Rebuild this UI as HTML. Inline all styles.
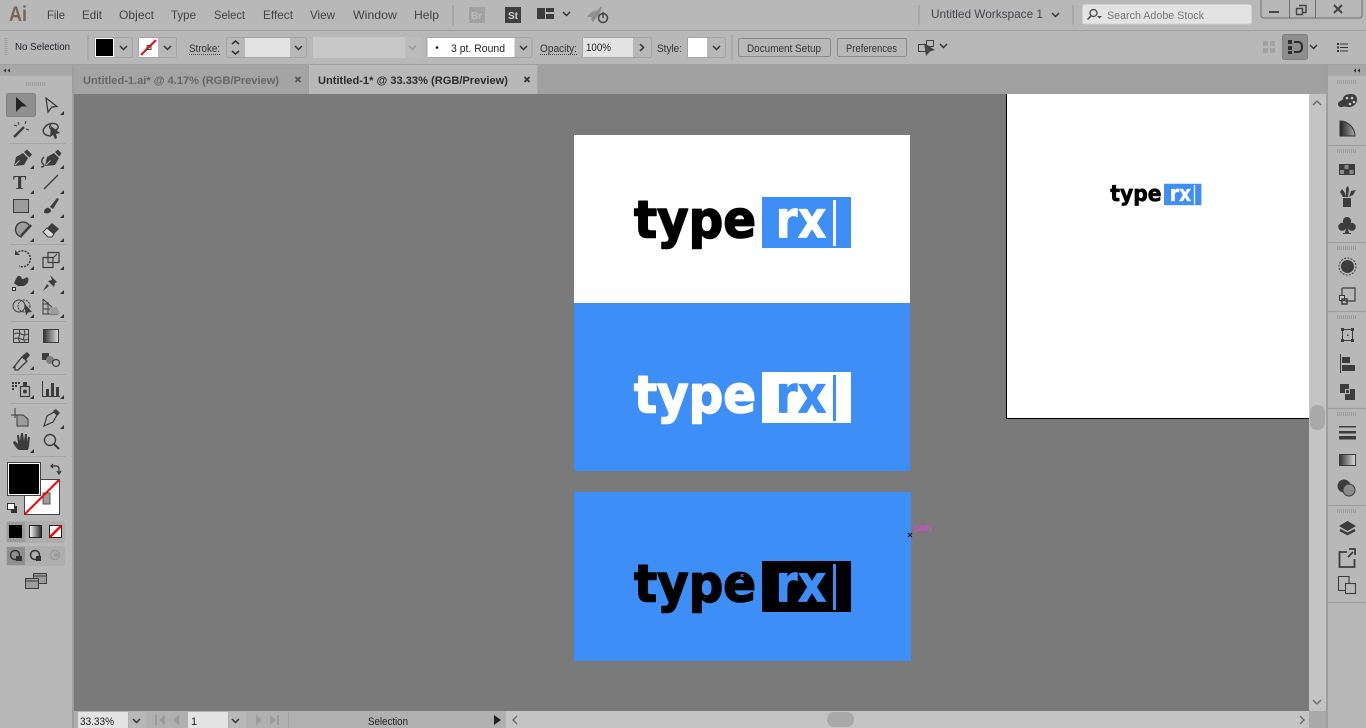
<!DOCTYPE html>
<html><head><meta charset="utf-8"><title>Illustrator</title>
<style>
html,body{margin:0;padding:0;width:1366px;height:728px;overflow:hidden;background:#b8b8b8}
svg{display:block;position:absolute;left:0;top:0}
text{font-family:"Liberation Sans",sans-serif;font-size:11px;fill:#333;white-space:pre}
.m{font-size:12px;fill:#444}
.b{font-weight:bold;font-size:11px}
.logo{font-family:"DejaVu Sans",sans-serif;font-weight:bold;font-size:52px;stroke-linejoin:round}
.ic{fill:#3c3c3c;stroke:none}
.ol{fill:none;stroke:#3c3c3c;stroke-width:1.4}
.ch{fill:none;stroke:#333;stroke-width:1.5}
.box{fill:#b8b8b8;stroke:#a4a4a4;stroke-width:1}
.tri{fill:#333}
</style></head><body>
<svg width="1366" height="728" viewBox="0 0 1366 728" xmlns="http://www.w3.org/2000/svg">
<defs>
<linearGradient id="g" x1="0" x2="1"><stop offset="0" stop-color="#333"/><stop offset="1" stop-color="#ddd"/></linearGradient>
<linearGradient id="g2" x1="0" x2="1"><stop offset="0" stop-color="#fff"/><stop offset="1" stop-color="#222"/></linearGradient>
<linearGradient id="g3" x1="0" x2="1"><stop offset="0" stop-color="#222"/><stop offset="1" stop-color="#aaa"/></linearGradient>
</defs>
<rect width="1366" height="728" fill="#b8b8b8"/>
<!-- row separators -->
<rect x="0" y="30" width="1366" height="1" fill="#a0a0a0"/>
<rect x="0" y="64" width="1366" height="1" fill="#a0a0a0"/>

<!-- menu bar -->
<text x="9" y="21" style="font-size:21px;font-weight:bold;fill:#7a6353" textLength="18" lengthAdjust="spacingAndGlyphs">Ai</text>
<text class="m" x="47" y="19" textLength="18" lengthAdjust="spacingAndGlyphs">File</text>
<text class="m" x="82" y="19" textLength="20" lengthAdjust="spacingAndGlyphs">Edit</text>
<text class="m" x="119" y="19" textLength="35" lengthAdjust="spacingAndGlyphs">Object</text>
<text class="m" x="171" y="19" textLength="25" lengthAdjust="spacingAndGlyphs">Type</text>
<text class="m" x="214" y="19" textLength="31" lengthAdjust="spacingAndGlyphs">Select</text>
<text class="m" x="263" y="19" textLength="30" lengthAdjust="spacingAndGlyphs">Effect</text>
<text class="m" x="310" y="19" textLength="25" lengthAdjust="spacingAndGlyphs">View</text>
<text class="m" x="353" y="19" textLength="44" lengthAdjust="spacingAndGlyphs">Window</text>
<text class="m" x="414" y="19" textLength="25" lengthAdjust="spacingAndGlyphs">Help</text>
<rect x="452" y="5" width="2" height="20" fill="#a8a8a8"/>
<rect x="469" y="7" width="16" height="16" fill="#a2a2a2"/>
<text x="471" y="19" style="font-size:10px;font-weight:bold;fill:#bcbcbc">Br</text>
<rect x="505" y="7" width="16" height="16" fill="#3f3f3f"/>
<text x="508" y="19" style="font-size:10px;font-weight:bold;fill:#cfcfcf">St</text>
<path class="ic" d="M537 8h8v11h-8zM546 8h8v4h-8zM546 14h8v5h-8z"/>
<path class="ch" d="M563 12l3.500 3.500 3.500-3.500"/>
<path d="M587 17c3-4 6-6 9-7l-4 7zM591 19c3-6 7-10 11-13-1 5-3 9-6 12l-3 4z" fill="#8c8c8c"/>
<circle cx="603" cy="18" r="4.500" fill="none" stroke="#444" stroke-width="1.500"/>
<rect x="602.300" y="12" width="1.500" height="6" fill="#444"/>
<rect x="918" y="5" width="2" height="20" fill="#a8a8a8"/>
<text class="m" x="931" y="18" textLength="112" lengthAdjust="spacingAndGlyphs" style="fill:#4a4450">Untitled Workspace 1</text>
<path class="ch" d="M1052 13l3.500 3.500 3.500-3.500"/>
<rect x="1072" y="5" width="2" height="20" fill="#a8a8a8"/>
<rect x="1082.500" y="4.500" width="169" height="19.500" rx="2" fill="#e3e3e3" stroke="#cfcfcf"/>
<circle cx="1093.500" cy="13" r="3.500" fill="none" stroke="#444" stroke-width="1.300"/>
<path d="M1091 16l-3.500 3.500" stroke="#444" stroke-width="1.500"/>
<path d="M1097 16h5l-2.500 2.500z" fill="#444"/>
<text x="1107" y="19" textLength="97" lengthAdjust="spacingAndGlyphs" style="fill:#777">Search Adobe Stock</text>
<path d="M1261 0v15q0 3 3 3h95q3 0 3-3V0" fill="none" stroke="#6e6e6e"/>
<path d="M1289.500 0v18M1315.500 0v18" stroke="#6e6e6e"/>
<rect x="1269" y="11" width="10" height="2" fill="#444"/>
<path d="M1299 5.500h7v7h-3M1296.500 8.500h6v6h-6z" fill="none" stroke="#444" stroke-width="1.400"/>
<path d="M1334 5l8 8M1342 5l-8 8" stroke="#444" stroke-width="2"/>

<!-- control bar -->
<path d="M6 38v18" stroke="#9c9c9c" stroke-width="3" stroke-dasharray="1 1"/>
<text x="15" y="50" textLength="55" lengthAdjust="spacingAndGlyphs" style="font-size:10px;fill:#223">No Selection</text>
<rect x="87" y="35" width="2" height="25" fill="#a8a8a8"/>
<rect x="94.500" y="37.500" width="38" height="20" rx="2" class="box"/>
<rect x="95" y="38" width="19" height="19" fill="#fff"/><rect x="96" y="39" width="17" height="17" fill="#000"/>
<path class="ch" d="M120 46l3.500 3.500 3.500-3.500"/>
<rect x="138.500" y="37.500" width="38" height="20" rx="2" class="box"/>
<rect x="139" y="38" width="19" height="19" fill="#fff"/>
<path d="M141 55l15-15" stroke="#e8131b" stroke-width="2.200"/>
<rect x="147" y="45.500" width="4" height="4" fill="none" stroke="#444"/>
<path class="ch" d="M164 46l3.500 3.500 3.500-3.500"/>
<text x="189" y="52" textLength="31" lengthAdjust="spacingAndGlyphs" style="font-size:11px">Stroke:</text>
<path d="M189 54.500h31" stroke="#444" stroke-dasharray="1 1"/>
<rect x="226.500" y="37.500" width="80" height="20" rx="2" class="box"/>
<rect x="245" y="38" width="45" height="19" fill="#e3e3e3"/>
<path class="ch" d="M232 44l3.500-3 3.500 3M232 51l3.500 3 3.500-3"/>
<path class="ch" d="M295 46l3.500 3.500 3.500-3.500"/>
<rect x="313" y="37" width="92" height="21" fill="#c8c8c8"/><rect x="405" y="37" width="17" height="21" fill="#bcbcbc"/>
<path d="M409 46l3.500 3.500 3.500-3.500" fill="none" stroke="#999" stroke-width="1.500"/>
<rect x="427" y="37.500" width="105" height="20" rx="2" fill="#b8b8b8" stroke="#a4a4a4"/>
<rect x="427.500" y="38" width="87" height="19" fill="#fff"/>
<circle cx="437" cy="47.500" r="1.300" fill="#111"/>
<text x="451" y="52" textLength="54" lengthAdjust="spacingAndGlyphs" style="font-size:11px;fill:#222">3 pt. Round</text>
<path class="ch" d="M520 46l3.500 3.500 3.500-3.500"/>
<text x="540" y="52" textLength="37" lengthAdjust="spacingAndGlyphs">Opacity:</text>
<path d="M540 54.500h37" stroke="#444" stroke-dasharray="1 1"/>
<rect x="582.500" y="37.500" width="69" height="20" rx="2" class="box"/>
<rect x="583" y="38" width="50" height="19" fill="#e3e3e3"/>
<text x="586" y="51" textLength="25" lengthAdjust="spacingAndGlyphs" style="fill:#222">100%</text>
<path class="ch" d="M640 44l3.500 3.500-3.500 3.500"/>
<text x="657" y="52" textLength="25" lengthAdjust="spacingAndGlyphs">Style:</text>
<rect x="687.500" y="37.500" width="38" height="20" rx="2" class="box"/>
<rect x="688" y="38" width="19" height="19" fill="#fff"/>
<path class="ch" d="M713 46l3.500 3.500 3.500-3.500"/>
<rect x="731" y="35" width="2" height="25" fill="#a8a8a8"/>
<rect x="738.500" y="38.500" width="92" height="18" rx="2" fill="#b8b8b8" stroke="#888"/>
<text x="747" y="52" textLength="74" lengthAdjust="spacingAndGlyphs" style="fill:#333">Document Setup</text>
<rect x="837.500" y="38.500" width="69" height="18" rx="2" fill="#b8b8b8" stroke="#888"/>
<text x="846" y="52" textLength="51" lengthAdjust="spacingAndGlyphs" style="fill:#333">Preferences</text>
<path d="M918.500 44.500h8v7h-8zM926.500 40.500h7v6h-7z" fill="none" stroke="#444"/>
<path d="M924 43l11 7-5 1.500-4 4.500z" fill="#444"/>
<path class="ch" d="M940 44l3.500 3.500 3.500-3.500"/>
<path d="M1263 41h5v5h-5zM1270 41h5v5h-5zM1263 48h5v5h-5zM1270 48h5v5h-5z" fill="#a2a2a2"/>
<rect x="1282.500" y="34.500" width="25" height="25" rx="2" fill="#8e8e8e" stroke="#808080"/>
<path d="M1288 40h4v4h-4zM1288 46h4v4h-4zM1288 51h4v3h-4z" fill="#2e2e2e"/>
<path d="M1294 42h4q4 0 4 5t-4 5h-4" fill="none" stroke="#2e2e2e" stroke-width="2"/>
<path class="ch" d="M1310 45l3.500 3.500 3.500-3.500"/>
<path d="M1337 43h2v2h-2zM1337 46.500h2v2h-2zM1337 50h2v2h-2zM1340 43.500h8v1h-8zM1340 47h8v1h-8zM1340 50.500h8v1h-8z" fill="#333"/>

<!-- tabs -->
<rect x="73" y="65" width="1254" height="29" fill="#a0a0a0"/>
<rect x="73" y="65" width="235" height="29" fill="#a4a4a4"/>
<rect x="309" y="65" width="228" height="29" fill="#b8b8b8"/>
<rect x="537" y="65" width="1" height="29" fill="#a8a8a8"/>
<text class="b" x="83" y="84" textLength="196" lengthAdjust="spacingAndGlyphs" style="fill:#666">Untitled-1.ai* @ 4.17% (RGB/Preview)</text>
<path d="M295.500 77l5 5M300.500 77l-5 5" stroke="#555" stroke-width="1.700"/>
<text class="b" x="318" y="84" textLength="190" lengthAdjust="spacingAndGlyphs" style="fill:#2c2c2c">Untitled-1* @ 33.33% (RGB/Preview)</text>
<path d="M524.500 77l5 5M529.500 77l-5 5" stroke="#333" stroke-width="1.700"/>

<!-- canvas -->
<rect x="74" y="94" width="1235" height="617" fill="#7a7a7a"/>

<!-- right artboard -->
<rect x="1006" y="94" width="303" height="325" fill="#000"/>
<rect x="1007" y="94" width="302" height="324" fill="#fff"/>

<!-- artboards -->
<rect x="574" y="135" width="336" height="168" fill="#fff"/>
<rect x="574" y="303" width="336" height="168" fill="#3e8ef7"/>
<rect x="574" y="492" width="337" height="169" fill="#3e8ef7"/>

<!-- logo 1 -->
<text class="logo" x="634" y="237.500" textLength="122" lengthAdjust="spacingAndGlyphs" style="fill:#000;stroke:#000;stroke-width:1.600">type</text>
<rect x="762" y="197" width="89" height="51" fill="#3e8ef7"/>
<text class="logo" x="775.500" y="237.500" textLength="51" lengthAdjust="spacingAndGlyphs" style="fill:#fff;stroke:#fff;stroke-width:.7">rx</text>
<rect x="833" y="200" width="3" height="46" fill="#fff"/>
<!-- logo 2 -->
<text class="logo" x="634" y="412.500" textLength="122" lengthAdjust="spacingAndGlyphs" style="fill:#fff;stroke:#fff;stroke-width:1.600">type</text>
<rect x="762" y="372" width="89" height="51" fill="#fff"/>
<text class="logo" x="775.500" y="412.500" textLength="51" lengthAdjust="spacingAndGlyphs" style="fill:#3e8ef7;stroke:#3e8ef7;stroke-width:.7">rx</text>
<rect x="833" y="375" width="3" height="46" fill="#3e8ef7"/>
<!-- logo 3 -->
<text class="logo" x="634" y="601.500" textLength="122" lengthAdjust="spacingAndGlyphs" style="fill:#000;stroke:#000;stroke-width:1.600">type</text>
<rect x="762" y="561" width="89" height="51" fill="#000"/>
<text class="logo" x="775.500" y="601.500" textLength="51" lengthAdjust="spacingAndGlyphs" style="fill:#3e8ef7;stroke:#3e8ef7;stroke-width:.7">rx</text>
<rect x="833" y="564" width="3" height="46" fill="#3e8ef7"/>
<!-- small logo -->
<g transform="translate(844 101) scale(.42)">
<text class="logo" x="634" y="237.500" textLength="122" lengthAdjust="spacingAndGlyphs" style="fill:#000;stroke:#000;stroke-width:1.600">type</text>
<rect x="762" y="197" width="89" height="51" fill="#3e8ef7"/>
<text class="logo" x="775.500" y="237.500" textLength="51" lengthAdjust="spacingAndGlyphs" style="fill:#fff;stroke:#fff;stroke-width:.7">rx</text>
<rect x="833" y="200" width="3" height="46" fill="#fff"/>
</g>
<!-- smart guide -->
<text x="914" y="531" style="font-size:9px;fill:#f03ce6">path</text>
<path d="M908 533l4 4M912 533l-4 4" stroke="#111" stroke-width="1"/>
<path d="M740.500 574l3 3M743.500 574l-3 3" stroke="#6a5ae0" stroke-width="1"/>

<!-- left toolbar -->
<rect x="0" y="65" width="72" height="11" fill="#a8a8a8"/>
<rect x="72" y="65" width="2" height="663" fill="#9e9e9e"/>
<path d="M6 68.500l-2.500 2 2.500 2zM10 68.500l-2.500 2 2.500 2z" fill="#333"/>
<path d="M26.500 82v4M28.500 82v4M30.500 82v4M32.500 82v4M34.500 82v4M36.500 82v4M38.500 82v4M40.500 82v4M42.500 82v4M44.500 82v4" stroke="#9a9a9a"/>
<rect x="6.500" y="93.500" width="29" height="23" rx="2" fill="#8f8f8f" stroke="#808080"/>
<path d="M16 97l11 9.500h-5.500l-5.500 5.500z" fill="#222"/>
<path d="M46 98l11 8.500-5 .5-4 5z" fill="none" stroke="#333" stroke-width="1.200"/>
<path class="tri" d="M64 111v4h-4z"/>
<!-- magic wand / lasso -->
<path d="M14 137l10-10" stroke="#3c3c3c" stroke-width="2.400"/>
<path d="M18 122l1 3M14 125l3 1M26 121l-1 3M29 130l-3-1" stroke="#3c3c3c"/>
<path class="ol" d="M50 136c-8-1-8-6-5-9 3-4 11-5 13-1 1 3-3 5-5 4-4-1-4-4-2-5"/>
<path d="M51 126l9 7-4 1 1 4-2 1-2-4-3 2z" fill="#3c3c3c"/>
<rect x="10" y="143" width="56" height="1" fill="#a4a4a4"/>
<!-- pen / curvature -->
<path class="ic" d="M14 166l2-9 7-4 5 5-4 7zM24 152l3-2.500 5 5-2.500 3z"/><path d="M15 165l4.500-4.500" stroke="#b8b8b8"/>
<path class="tri" d="M34 165v4h-4z"/>
<path class="ic" d="M45 166l2-9 7-4 5 5-4 7zM55 152l3-2.500 3.500 4-2.500 3z"/><path d="M46 165l4.500-4.500" stroke="#b8b8b8"/>
<path class="ol" d="M44 157c-3 3-3 5-1 7s0 3-2 3"/>
<path class="tri" d="M64 165v4h-4z"/>
<!-- type / line -->
<text x="13" y="189" style="font-family:'Liberation Serif',serif;font-size:20px;font-weight:bold;fill:#3c3c3c">T</text>
<path class="tri" d="M34 190v4h-4z"/>
<path d="M44 189l14-14" stroke="#3c3c3c" stroke-width="1.300"/>
<path class="tri" d="M64 190v4h-4z"/>
<!-- rect / brush -->
<rect x="13.500" y="199.500" width="15" height="13" fill="#9c9c9c" stroke="#3c3c3c"/>
<path class="tri" d="M34 214v4h-4z"/>
<path class="ic" d="M44 213c0-4 3-6 5-5l2 2c0 3-3 4-7 3zM50 207l7-9 2 1-6 10z"/>
<path class="tri" d="M64 214v4h-4z"/>
<!-- shaper / eraser -->
<path d="M29 225a7.500 7.500 0 1 0-7 12" fill="#9c9c9c" stroke="#3c3c3c" stroke-width="1.400"/>
<path d="M21 236l10-11" stroke="#3c3c3c" stroke-width="2.500"/>
<path class="tri" d="M34 238v4h-4z"/>
<path class="ic" d="M43 232l9-9 7 6-5 5z"/><path d="M43 232l4-4 7 6-2 3h-4z" fill="#d8d8d8" stroke="#3c3c3c"/>
<path class="tri" d="M64 238v4h-4z"/>
<rect x="10" y="244" width="56" height="1" fill="#a4a4a4"/>
<!-- rotate / scale -->
<path d="M16 254a8 8 0 1 1 3 12" fill="none" stroke="#3c3c3c" stroke-width="1.500" stroke-dasharray="2 1.200"/>
<path d="M15 250v5h5z" fill="#3c3c3c"/>
<path class="tri" d="M34 266v4h-4z"/>
<path d="M43 257.500h10v10h-10zM48 252.500h11v10h-11z" fill="none" stroke="#3c3c3c" stroke-width="1.200"/>
<path d="M53 258l4-4" stroke="#3c3c3c"/>
<path class="tri" d="M64 266v4h-4z"/>
<!-- width / pin -->
<path class="ic" d="M14 283c2-4 3-8 6-7 2 1 1 3 3 3s3-3 5-1c2 3-2 8-5 8-4 0-5 1-9-3z"/>
<rect x="12.500" y="287.500" width="3" height="3" fill="#ddd" stroke="#333"/>
<path class="tri" d="M34 290v4h-4z"/>
<path class="ic" d="M50 275l7 7-2 1-1 4-6-6 4-1zM47 284l2 2-6 5z"/>
<path class="tri" d="M64 290v4h-4z"/>
<!-- shape builder / perspective -->
<circle cx="19" cy="306" r="6" fill="none" stroke="#3c3c3c"/><circle cx="24" cy="306" r="6" fill="none" stroke="#3c3c3c" stroke-dasharray="2 1"/>
<path d="M24 303l8 9-4 .5-2 3z" fill="#3c3c3c"/>
<path class="tri" d="M34 314v4h-4z"/>
<path d="M43 299v15h15M43 299l12 11M43 304h6M43 309h10M48 302v12" fill="none" stroke="#3c3c3c"/>
<path d="M50 307h7l3 7h-10z" fill="#9c9c9c"/>
<path class="tri" d="M64 314v4h-4z"/>
<rect x="10" y="321" width="56" height="1" fill="#a4a4a4"/>
<!-- mesh / gradient -->
<rect x="13.500" y="329.500" width="15" height="13" fill="none" stroke="#3c3c3c"/>
<path d="M14 334c5-3 9 3 14 0M14 339c5-3 9 3 14 0M19 330c3 4-3 8 1 12M24 330c3 4-3 8 1 12" fill="none" stroke="#3c3c3c"/>
<rect x="43.500" y="329.500" width="15" height="13" fill="url(#g)" stroke="#3c3c3c"/>
<!-- eyedropper / blend -->
<path d="M15 366l-2 2 9-11 5 4-9 9h-3z" fill="none" stroke="#3c3c3c" stroke-width="1.300"/>
<path class="ic" d="M22 356l5-4 3 3-4 5z"/>
<path class="tri" d="M34 366v4h-4z"/>
<rect x="42" y="353" width="7" height="7" fill="#3c3c3c"/><circle cx="50" cy="360" r="4" fill="#7c7c7c"/><circle cx="56" cy="363" r="3.500" fill="none" stroke="#3c3c3c" stroke-width="1.200"/>
<rect x="10" y="374" width="56" height="1" fill="#a4a4a4"/>
<!-- symbol sprayer / graph -->
<path d="M12 382h2v2h-2zM15 382h2v2h-2zM18 382h2v2h-2zM12 385h2v2h-2zM15 385h2v2h-2zM12 388h2v2h-2z" fill="#3c3c3c"/>
<rect x="20.500" y="386.500" width="9" height="10" fill="none" stroke="#3c3c3c" stroke-width="1.200"/><circle cx="25" cy="391.500" r="2" fill="#3c3c3c"/><rect x="23" y="382" width="4" height="4" fill="#3c3c3c"/>
<path class="tri" d="M34 395v4h-4z"/>
<path d="M42.500 381v15.500H60" fill="none" stroke="#3c3c3c"/>
<path class="ic" d="M46 389h3v7h-3zM51 383h3v13h-3zM56 387h3v9h-3z"/>
<path class="tri" d="M64 395v4h-4z"/>
<rect x="10" y="403" width="56" height="1" fill="#a4a4a4"/>
<!-- artboard / slice -->
<path d="M11 415h7M15 408v10" stroke="#3c3c3c"/>
<path d="M17 415h6l5 4v7h-11z" fill="#9c9c9c" stroke="#3c3c3c"/>
<path d="M44 426l3-10 7-4 3 3-4 7z" fill="none" stroke="#3c3c3c" stroke-width="1.200"/>
<path class="ic" d="M53 411l3-2 4 4-3 3z"/>
<path class="tri" d="M64 425v4h-4z"/>
<!-- hand / zoom -->
<path class="ic" d="M19 450c-3-2-5-5-6-8l2-1 3 3-1-9h2l1 6 1-8h2l1 8 1-7h2v8l1-5h2l-1 9-1 4z"/>
<path class="tri" d="M34 449v4h-4z"/>
<circle cx="50" cy="440" r="5.500" fill="none" stroke="#3c3c3c" stroke-width="1.400"/>
<path d="M54 444l5 5" stroke="#3c3c3c" stroke-width="2"/>
<rect x="10" y="456" width="56" height="1" fill="#a4a4a4"/>
<!-- fill / stroke -->
<rect x="24.500" y="479.500" width="35" height="35" fill="#fff" stroke="#444"/>
<rect x="43" y="493" width="7" height="11" fill="#9c9c9c" stroke="#555"/>
<path d="M25 514l34-34" stroke="#f00" stroke-width="2"/>
<rect x="7" y="462" width="34" height="34" fill="#444"/>
<rect x="8" y="463" width="32" height="32" fill="#fff"/>
<rect x="9" y="464" width="30" height="30" fill="#000"/>
<path d="M53 464l-2 2 2 2M51 466h5q3 0 3 3v4M57 471l2 3 2-3" fill="none" stroke="#333" stroke-width="1.200"/>
<rect x="11.500" y="506.500" width="5" height="6" fill="#333" stroke="#333"/>
<rect x="7.500" y="503.500" width="7" height="6" fill="#fff" stroke="#333"/>
<!-- colour modes -->
<rect x="6" y="521" width="59" height="22" rx="2" fill="#aeaeae"/>
<rect x="7" y="522" width="18" height="20" fill="#9c9c9c"/>
<rect x="9" y="525" width="13" height="13" fill="#000"/>
<rect x="29.500" y="525.500" width="12" height="12" fill="url(#g2)" stroke="#222"/>
<rect x="49.500" y="525.500" width="12" height="12" fill="#fff" stroke="#222"/>
<path d="M50 537l11-11" stroke="#f00" stroke-width="2.500"/>
<!-- draw modes -->
<rect x="6" y="546" width="59" height="20" rx="2" fill="#aeaeae"/>
<rect x="7" y="547" width="18" height="18" fill="#8f8f8f"/>
<circle cx="15" cy="555" r="4.500" fill="none" stroke="#333" stroke-width="1.500"/><rect x="16" y="556" width="6" height="5" fill="#333"/>
<circle cx="35" cy="555" r="4.500" fill="none" stroke="#333" stroke-width="1.500"/><rect x="36" y="556" width="5" height="5" fill="#333"/>
<circle cx="55" cy="555" r="4.500" fill="none" stroke="#9a9a9a" stroke-width="1.500"/><circle cx="56" cy="555" r="2" fill="#9a9a9a"/>
<!-- screen mode -->
<rect x="33.500" y="573.500" width="13" height="10" fill="#9c9c9c" stroke="#3c3c3c"/>
<rect x="25.500" y="578.500" width="13" height="10" fill="#9c9c9c" stroke="#3c3c3c"/>
<path d="M26 581h12M34 576h12" stroke="#3c3c3c"/>

<!-- scrollbars -->
<rect x="1309" y="94" width="17" height="617" fill="#c4c4c4"/>
<rect x="1310" y="405" width="15" height="25" rx="7" fill="#a9a9a9"/>
<path d="M1313 105l4-4 4 4" fill="none" stroke="#666" stroke-width="1.300"/>
<path d="M1313 700l4 4 4-4" fill="none" stroke="#666" stroke-width="1.300"/>
<rect x="505" y="711" width="804" height="17" fill="#c4c4c4"/>
<rect x="827" y="712" width="27" height="15" rx="7" fill="#a9a9a9"/>
<path d="M1300 716l4 4-4 4M517 716l-4 4 4 4" fill="none" stroke="#666" stroke-width="1.300"/>
<rect x="1309" y="711" width="17" height="17" fill="#a9a9a9"/>

<!-- status bar -->
<rect x="74" y="711" width="431" height="17" fill="#b0b0b0"/>
<rect x="78" y="712" width="50" height="16" fill="#e3e3e3"/>
<text x="80" y="725" textLength="34" lengthAdjust="spacingAndGlyphs" style="fill:#222">33.33%</text>
<rect x="129" y="712" width="17" height="16" fill="#b8b8b8"/>
<path class="ch" d="M133 719l3.500 3.500 3.500-3.500"/>
<path d="M155 715h2v10h-2zM165 715v10l-6-5zM179 715v10l-6-5z" fill="#9a9a9a"/>
<rect x="188" y="712" width="40" height="16" fill="#e3e3e3"/>
<text x="191" y="725" style="fill:#222">1</text>
<rect x="229" y="712" width="17" height="16" fill="#b8b8b8"/>
<path class="ch" d="M232 719l3.500 3.500 3.500-3.500"/>
<path d="M256 715v10l6-5zM270 715v10l6-5zM277 715h2v10h-2z" fill="#9a9a9a"/>
<rect x="288" y="712" width="1" height="16" fill="#a4a4a4"/>
<text x="368" y="725" textLength="40" lengthAdjust="spacingAndGlyphs" style="fill:#222">Selection</text>
<path d="M494 715v10l7-5z" fill="#222"/>
<rect x="505" y="711" width="1" height="17" fill="#b0b0b0"/>

<!-- right panel dock -->
<rect x="1326" y="65" width="2" height="663" fill="#9e9e9e"/>
<rect x="1328" y="65" width="38" height="11" fill="#a8a8a8"/>
<path d="M1356 68.500l-2.500 2 2.500 2zM1360 68.500l-2.500 2 2.500 2z" fill="#333"/>
<path d="M1328 145.500h38M1328 242.500h38M1328 311.500h38M1328 408.500h38M1328 505.500h38M1328 602.500h38" stroke="#9e9e9e" stroke-width="1.200"/>
<path d="M1337.500 80v4M1339.500 80v4M1341.500 80v4M1343.500 80v4M1345.500 80v4M1347.500 80v4M1349.500 80v4M1351.500 80v4M1353.500 80v4M1355.500 80v4
M1337.500 149v4M1339.500 149v4M1341.500 149v4M1343.500 149v4M1345.500 149v4M1347.500 149v4M1349.500 149v4M1351.500 149v4M1353.500 149v4M1355.500 149v4
M1337.500 246v4M1339.500 246v4M1341.500 246v4M1343.500 246v4M1345.500 246v4M1347.500 246v4M1349.500 246v4M1351.500 246v4M1353.500 246v4M1355.500 246v4
M1337.500 315v4M1339.500 315v4M1341.500 315v4M1343.500 315v4M1345.500 315v4M1347.500 315v4M1349.500 315v4M1351.500 315v4M1353.500 315v4M1355.500 315v4
M1337.500 412v4M1339.500 412v4M1341.500 412v4M1343.500 412v4M1345.500 412v4M1347.500 412v4M1349.500 412v4M1351.500 412v4M1353.500 412v4M1355.500 412v4
M1337.500 509v4M1339.500 509v4M1341.500 509v4M1343.500 509v4M1345.500 509v4M1347.500 509v4M1349.500 509v4M1351.500 509v4M1353.500 509v4M1355.500 509v4" stroke="#9a9a9a"/>
<!-- palette -->
<path class="ic" d="M1338 104c0-3 4-3 5-5 0-3 3-5 8-5s6 3 6 6-3 7-8 7c-3 0-4-1-7 0-2 .5-4-1-4-3z"/>
<circle cx="1347" cy="98" r="1.300" fill="#ccc"/><circle cx="1352" cy="98" r="1.300" fill="#ccc"/><circle cx="1354" cy="102" r="1.300" fill="#ccc"/><circle cx="1350" cy="104" r="1.300" fill="#ccc"/>
<!-- colour guide -->
<path d="M1340 121c8 0 15 7 15 15h-15z" fill="url(#g3)" stroke="#333"/>
<!-- swatches -->
<rect x="1339" y="164" width="16" height="11" fill="#3c3c3c"/>
<path d="M1344.500 165h4v4h-4zM1349.500 170h4v4h-4zM1340 170h4v4h-4z" fill="#8a8a8a"/>
<!-- brushes -->
<rect x="1343" y="198" width="8" height="9" fill="#3c3c3c"/>
<path class="ic" d="M1343 197l-3-5 2-3 3 4 1 4zM1346 197v-9l2-2 1 3-1 8zM1349 197l2-6 5-1-3 5z"/>
<!-- club -->
<path class="ic" d="M1347 217a4 4 0 0 1 3.500 6 4 4 0 1 1-2.500 5l1 5h2v1h-8v-1h2l1-5a4 4 0 1 1-2.500-5 4 4 0 0 1 3.500-6z"/>
<!-- appearance -->
<circle cx="1347.500" cy="266.500" r="6.500" fill="#3c3c3c"/>
<circle cx="1347.500" cy="266.500" r="8.500" fill="none" stroke="#3c3c3c" stroke-dasharray="2 1.300"/>
<!-- graphic styles -->
<path d="M1342 288h13v13h-10" fill="none" stroke="#3c3c3c" stroke-width="1.200"/>
<path d="M1342 288v8" stroke="#3c3c3c" stroke-width="1.200"/>
<rect x="1339.500" y="295.500" width="5" height="5" fill="#ccc" stroke="#3c3c3c"/>
<rect x="1342" y="299" width="5" height="5" fill="none" stroke="#3c3c3c" stroke-width="1.500"/>
<!-- transform -->
<path d="M1342.500 329.500h10v11h-10z" fill="none" stroke="#3c3c3c"/>
<path d="M1341 328h3v3h-3zM1351 328h3v3h-3zM1341 339h3v3h-3zM1351 339h3v3h-3zM1347 334.500h1.500v1.500h-1.500z" fill="#3c3c3c"/>
<!-- align -->
<path class="ic" d="M1340 354h1v19h-1zM1342 357h8v6h-8zM1342 365h13v6h-13z"/>
<!-- pathfinder -->
<path class="ic" d="M1340 384h9v5h-4v4h-5zM1346 390h3v3h-3zM1350 389h5v11h-10v-6h5z"/>
<!-- stroke -->
<path class="ic" d="M1339 426h17v1.500h-17zM1339 431h17v2.500h-17zM1339 436h17v3.500h-17z"/>
<!-- gradient -->
<rect x="1339.500" y="454.500" width="16" height="11" fill="url(#g)" stroke="#3c3c3c"/>
<!-- transparency -->
<circle cx="1344" cy="486" r="6.500" fill="#3c3c3c"/>
<circle cx="1349" cy="490" r="6" fill="#8c8c8c" stroke="#3c3c3c"/>
<!-- layers -->
<path class="ic" d="M1347.500 521l8.500 5-8.500 5-8.500-5z"/>
<path d="M1340 530l7.500 4 7.500-4" fill="none" stroke="#3c3c3c" stroke-width="2.500"/>
<!-- export -->
<path d="M1347 552h-7.500v15h15v-8" fill="none" stroke="#3c3c3c" stroke-width="1.800"/>
<path d="M1348 557l5-5M1349 549h6v6" fill="none" stroke="#3c3c3c" stroke-width="1.800"/>
<!-- artboards -->
<path d="M1349 583v-6.500h-10.500v14h7" fill="none" stroke="#3c3c3c" stroke-width="1.100"/>
<rect x="1345.500" y="583.500" width="10" height="10" fill="none" stroke="#3c3c3c" stroke-width="1.100"/>
</svg>
</body></html>
